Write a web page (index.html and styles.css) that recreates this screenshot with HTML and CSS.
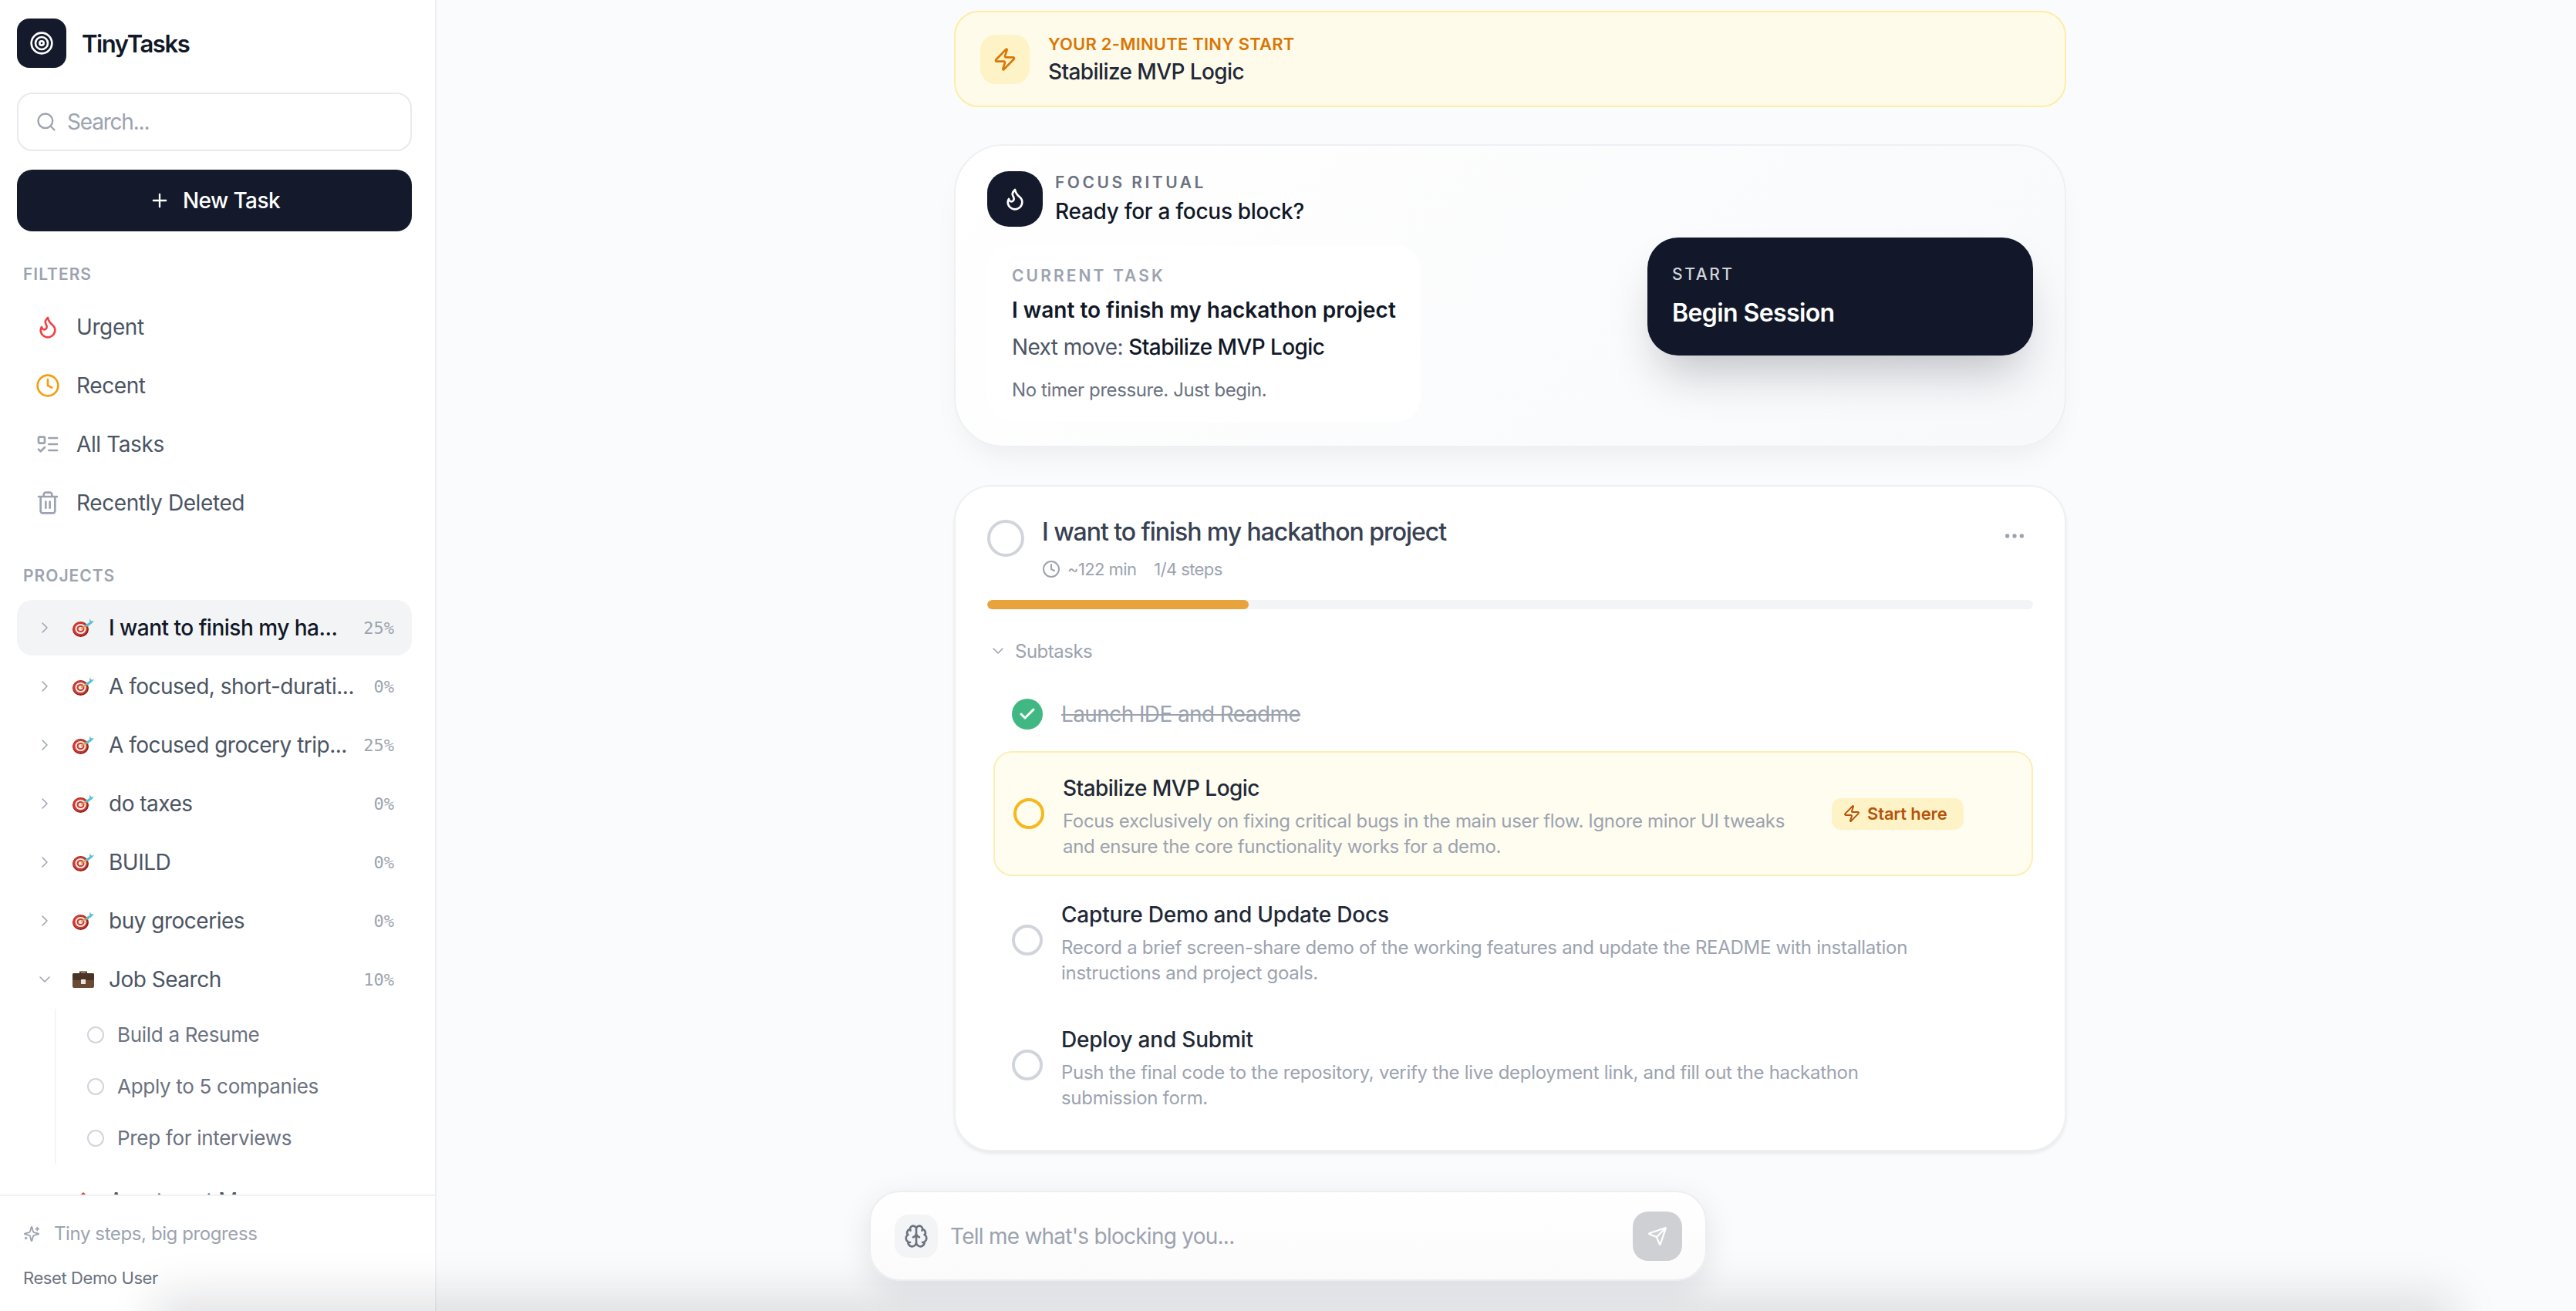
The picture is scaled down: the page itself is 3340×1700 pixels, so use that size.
FILE: index.html
```html
<!DOCTYPE html>
<html>
  <head>
    <title>TinyTasks</title>
    <meta charset="UTF-8" />
    <link rel="stylesheet" href="styles.css">
  </head>
  <body>
    <svg class="defs" width="0" height="0">
      <symbol id="i-flame" viewBox="0 0 24 24"><path d="M8.5 14.5A2.5 2.5 0 0 0 11 12c0-1.38-.5-2-1-3-1.072-2.143-.224-4.054 2-6 .5 2.5 2 4.9 4 6.5 2 1.6 3 3.5 3 5.5a7 7 0 1 1-14 0c0-1.153.433-2.294 1-3a2.5 2.5 0 0 0 2.5 2.5z"/></symbol>
      <symbol id="i-clock" viewBox="0 0 24 24"><circle cx="12" cy="12" r="10"/><path d="M12 6v6l4 2"/></symbol>
      <symbol id="i-todo" viewBox="0 0 24 24"><rect x="3" y="5" width="6" height="6" rx="1"/><path d="m3 17 2 2 4-4M13 6h8M13 12h8M13 18h8"/></symbol>
      <symbol id="i-trash" viewBox="0 0 24 24"><path d="M3 6h18M19 6v14c0 1-1 2-2 2H7c-1 0-2-1-2-2V6M8 6V4c0-1 1-2 2-2h4c1 0 2 1 2 2v2M10 11v6M14 11v6"/></symbol>
      <symbol id="i-zap" viewBox="0 0 24 24"><path d="M4 14a1 1 0 0 1-.78-1.63l9.9-10.2a.5.5 0 0 1 .86.46l-1.92 6.02A1 1 0 0 0 13 10h7a1 1 0 0 1 .78 1.63l-9.9 10.2a.5.5 0 0 1-.86-.46l1.92-6.02A1 1 0 0 0 11 14z"/></symbol>
      <symbol id="i-right" viewBox="0 0 24 24"><path d="m9 18 6-6-6-6"/></symbol>
      <symbol id="i-down" viewBox="0 0 24 24"><path d="m6 9 6 6 6-6"/></symbol>
      <symbol id="i-dart" viewBox="0 0 28 24">
        <ellipse cx="10.5" cy="14" rx="10.5" ry="10" fill="#8f1f1a"/>
        <ellipse cx="10" cy="13.5" rx="9.5" ry="9" fill="#cf3a30"/>
        <ellipse cx="10.5" cy="13.5" rx="7" ry="6.6" fill="#f7ece8"/>
        <ellipse cx="10.5" cy="13.5" rx="5" ry="4.6" fill="#cf3a30"/>
        <ellipse cx="10.5" cy="13.5" rx="2.8" ry="2.5" fill="#f7ece8"/>
        <path d="M11 13.5 18 9" stroke="#d9a441" stroke-width="1.6" fill="none"/>
        <path d="M16.5 8.5 22 5 22.500 0.5 24.500 3.5 28 3 25 6.5 19 11z" fill="#5cc0cf"/>
      </symbol>
      <symbol id="i-case" viewBox="0 0 28 24">
        <path d="M10 5V2.500h8V5" fill="none" stroke="#5a3d2b" stroke-width="2"/>
        <rect x="0" y="4" width="28" height="19" rx="2" fill="#6b4a33"/>
        <rect x="0" y="4" width="28" height="9" rx="2" fill="#4a3224"/>
        <rect x="11" y="12" width="6" height="6" fill="#e8e4df"/>
      </symbol>
      <symbol id="i-house" viewBox="0 0 28 24">
        <path d="M14 1 1 13h3v10h20V13h3z" fill="#f1e3cd"/>
        <path d="M14 1 1 13h4L14 5l9 8h4z" fill="#c9503c"/>
      </symbol>
    </svg>

    <aside class="sidebar">
      <div class="brand">
        <div class="brand-logo">
          <svg class="icon" viewBox="0 0 24 24"><circle cx="12" cy="12" r="10"/><circle cx="12" cy="12" r="6"/><circle cx="12" cy="12" r="2"/></svg>
        </div>
        <span class="brand-name">TinyTasks</span>
      </div>

      <div class="search">
        <svg class="icon" viewBox="0 0 24 24"><circle cx="11" cy="11" r="8"/><path d="m21 21-4.300-4.300"/></svg>
        <span>Search...</span>
      </div>

      <button class="new-task">
        <svg class="icon" viewBox="0 0 24 24"><path d="M5 12h14M12 5v14"/></svg>
        New Task
      </button>

      <div class="nav">
        <div class="section-label">FILTERS</div>
        <div class="filter"><svg class="icon red"><use href="#i-flame"/></svg>Urgent</div>
        <div class="filter"><svg class="icon amber"><use href="#i-clock"/></svg>Recent</div>
        <div class="filter"><svg class="icon gray"><use href="#i-todo"/></svg>All Tasks</div>
        <div class="filter"><svg class="icon gray"><use href="#i-trash"/></svg>Recently Deleted</div>

        <div class="section-label projects-label">PROJECTS</div>
        <div class="project active">
          <svg class="icon chev"><use href="#i-right"/></svg>
          <svg class="emoji"><use href="#i-dart"/></svg>
          <span class="project-name">I want to finish my ha...</span>
          <span class="pct">25%</span>
        </div>
        <div class="project">
          <svg class="icon chev"><use href="#i-right"/></svg>
          <svg class="emoji"><use href="#i-dart"/></svg>
          <span class="project-name">A focused, short-durati...</span>
          <span class="pct">0%</span>
        </div>
        <div class="project">
          <svg class="icon chev"><use href="#i-right"/></svg>
          <svg class="emoji"><use href="#i-dart"/></svg>
          <span class="project-name">A focused grocery trip...</span>
          <span class="pct">25%</span>
        </div>
        <div class="project">
          <svg class="icon chev"><use href="#i-right"/></svg>
          <svg class="emoji"><use href="#i-dart"/></svg>
          <span class="project-name">do taxes</span>
          <span class="pct">0%</span>
        </div>
        <div class="project">
          <svg class="icon chev"><use href="#i-right"/></svg>
          <svg class="emoji"><use href="#i-dart"/></svg>
          <span class="project-name">BUILD</span>
          <span class="pct">0%</span>
        </div>
        <div class="project">
          <svg class="icon chev"><use href="#i-right"/></svg>
          <svg class="emoji"><use href="#i-dart"/></svg>
          <span class="project-name">buy groceries</span>
          <span class="pct">0%</span>
        </div>
        <div class="project">
          <svg class="icon chev"><use href="#i-down"/></svg>
          <svg class="emoji"><use href="#i-case"/></svg>
          <span class="project-name">Job Search</span>
          <span class="pct">10%</span>
        </div>
        <div class="project-tasks">
          <div class="project-task"><span class="dot"></span>Build a Resume</div>
          <div class="project-task"><span class="dot"></span>Apply to 5 companies</div>
          <div class="project-task"><span class="dot"></span>Prep for interviews</div>
        </div>
        <div class="project">
          <svg class="icon chev"><use href="#i-right"/></svg>
          <svg class="emoji"><use href="#i-house"/></svg>
          <span class="project-name">Apartment Move</span>
          <span class="pct">17%</span>
        </div>
      </div>

      <div class="side-footer">
        <div class="tagline">
          <svg class="icon" viewBox="0 0 24 24"><path d="M9.937 15.500A2 2 0 0 0 8.500 14.063l-6.135-1.582a.5.5 0 0 1 0-.962L8.500 9.936A2 2 0 0 0 9.937 8.500l1.582-6.135a.5.5 0 0 1 .963 0L14.063 8.500A2 2 0 0 0 15.500 9.937l6.135 1.581a.5.5 0 0 1 0 .964L15.500 14.063a2 2 0 0 0-1.437 1.437l-1.582 6.135a.5.5 0 0 1-.963 0zM20 3v4M22 5h-4M4 17v2M5 18H3"/></svg>
          Tiny steps, big progress
        </div>
        <div class="reset">Reset Demo User</div>
      </div>
    </aside>

    <main class="main">
      <div class="column">
        <section class="tiny-start">
          <div class="tiny-icon"><svg class="icon"><use href="#i-zap"/></svg></div>
          <div>
            <div class="tiny-label">YOUR 2-MINUTE TINY START</div>
            <div class="tiny-title">Stabilize MVP Logic</div>
          </div>
        </section>

        <section class="focus">
          <div class="focus-head">
            <div class="focus-icon"><svg class="icon"><use href="#i-flame"/></svg></div>
            <div>
              <div class="focus-label">FOCUS RITUAL</div>
              <div class="focus-title">Ready for a focus block?</div>
            </div>
          </div>
          <div class="focus-body">
            <div class="current">
              <div class="current-label">CURRENT TASK</div>
              <div class="current-task">I want to finish my hackathon project</div>
              <div class="current-next">Next move: <b>Stabilize MVP Logic</b></div>
              <div class="current-note">No timer pressure. Just begin.</div>
            </div>
            <button class="begin">
              <span class="begin-label">START</span>
              <span class="begin-title">Begin Session</span>
            </button>
          </div>
        </section>

        <section class="task">
          <div class="task-head">
            <span class="task-check"></span>
            <div class="task-info">
              <div class="task-title">I want to finish my hackathon project</div>
              <div class="task-meta">
                <svg class="icon"><use href="#i-clock"/></svg>
                <span>~122 min</span>
                <span class="steps">1/4 steps</span>
              </div>
            </div>
            <svg class="icon more" viewBox="0 0 24 24"><circle cx="5" cy="12" r="1"/><circle cx="12" cy="12" r="1"/><circle cx="19" cy="12" r="1"/></svg>
          </div>

          <div class="progress"><div class="progress-fill" style="width: 25%"></div></div>

          <div class="subtasks-toggle">
            <svg class="icon"><use href="#i-down"/></svg>
            Subtasks
          </div>

          <div class="subtask done">
            <span class="check-done">
              <svg class="icon" viewBox="0 0 24 24"><path d="M20 6 9 17l-5-5"/></svg>
            </span>
            <span class="subtask-title">Launch IDE and Readme</span>
          </div>

          <div class="subtask current-step">
            <span class="circle"></span>
            <div class="subtask-text">
              <div class="subtask-title">Stabilize MVP Logic</div>
              <div class="subtask-desc">Focus exclusively on fixing critical bugs in the main user flow. Ignore minor UI tweaks<br>and ensure the core functionality works for a demo.</div>
            </div>
            <span class="start-here"><svg class="icon"><use href="#i-zap"/></svg>Start here</span>
          </div>

          <div class="subtask">
            <span class="circle"></span>
            <div class="subtask-text">
              <div class="subtask-title">Capture Demo and Update Docs</div>
              <div class="subtask-desc">Record a brief screen-share demo of the working features and update the README with installation<br>instructions and project goals.</div>
            </div>
          </div>

          <div class="subtask">
            <span class="circle"></span>
            <div class="subtask-text">
              <div class="subtask-title">Deploy and Submit</div>
              <div class="subtask-desc">Push the final code to the repository, verify the live deployment link, and fill out the hackathon<br>submission form.</div>
            </div>
          </div>
        </section>
      </div>
    </main>

    <div class="bottom-shade"></div>

    <div class="composer">
      <div class="composer-icon">
        <svg class="icon" viewBox="0 0 24 24"><path d="M12 5a3 3 0 1 0-5.997.125 4 4 0 0 0-2.526 5.770 4 4 0 0 0 .556 6.588A4 4 0 1 0 12 18ZM12 5a3 3 0 1 1 5.997.125 4 4 0 0 1 2.526 5.770 4 4 0 0 1-.556 6.588A4 4 0 1 1 12 18ZM15 13a4.500 4.500 0 0 1-3-4 4.500 4.500 0 0 1-3 4M17.599 6.500a3 3 0 0 0 .399-1.375M6.003 5.125A3 3 0 0 0 6.401 6.500M3.477 10.896a4 4 0 0 1 .585-.396M19.938 10.500a4 4 0 0 1 .585.396M6 18a4 4 0 0 1-1.967-.516M19.967 17.484A4 4 0 0 1 18 18"/></svg>
      </div>
      <span class="composer-text">Tell me what's blocking you...</span>
      <button class="send">
        <svg class="icon" viewBox="0 0 24 24"><path d="M14.536 21.686a.5.5 0 0 0 .937-.024l6.500-19a.496.496 0 0 0-.635-.635l-19 6.500a.5.5 0 0 0-.024.937l7.930 3.180a2 2 0 0 1 1.112 1.110zM21.854 2.147l-10.940 10.939"/></svg>
      </button>
    </div>
  </body>
</html>
```

FILE: styles.css
```css
* {
  box-sizing: border-box;
}

html,
body {
  margin: 0;
  padding: 0;
  height: 100%;
}

body {
  display: flex;
  position: relative;
  overflow: hidden;
  font-family: Inter, "Noto Sans", sans-serif;
  background-color: #fafbfc;
  color: #111827;
}

button {
  font-family: inherit;
  border: none;
  cursor: pointer;
}

.defs {
  position: absolute;
}

.icon {
  fill: none;
  stroke: currentColor;
  stroke-width: 2;
  stroke-linecap: round;
  stroke-linejoin: round;
  flex-shrink: 0;
}

/* sidebar */
.sidebar {
  width: 566px;
  height: 1700px;
  flex-shrink: 0;
  display: flex;
  flex-direction: column;
  background: #fff;
  border-right: 2px solid #eef0f2;
}

.brand {
  display: flex;
  align-items: center;
  gap: 20px;
  margin: 24px 22px 32px;
}

.brand-logo {
  width: 64px;
  height: 64px;
  border-radius: 16px;
  background: #141a2b;
  color: #fff;
  display: flex;
  align-items: center;
  justify-content: center;
}

.brand-logo .icon {
  width: 32px;
  height: 32px;
}

.brand-name {
  font-size: 31px;
  font-weight: 600;
  letter-spacing: -1.4px;
}

.search {
  display: flex;
  align-items: center;
  gap: 13px;
  height: 76px;
  margin: 0 30px 24px 22px;
  padding-left: 22px;
  border: 2px solid #e8eaed;
  border-radius: 20px;
  font-size: 28px;
  letter-spacing: -1.2px;
  color: #9ca3af;
}

.search .icon {
  width: 28px;
  height: 28px;
}

.new-task {
  display: flex;
  align-items: center;
  justify-content: center;
  gap: 16px;
  height: 80px;
  margin: 0 30px 0 22px;
  border-radius: 20px;
  background: #141a2b;
  color: #fff;
  font-size: 28px;
  font-weight: 500;
  letter-spacing: -0.6px;
}

.new-task .icon {
  width: 28px;
  height: 28px;
}

.nav {
  flex: 1;
  min-height: 0;
  overflow: hidden;
  padding: 44px 30px 0 22px;
}

.section-label {
  padding-left: 8px;
  font-size: 21px;
  line-height: 24px;
  font-weight: 600;
  letter-spacing: 1px;
  color: #9ca3af;
  margin-bottom: 20px;
}

.projects-label {
  margin-top: 47px;
  margin-bottom: 19px;
}

.filter {
  display: flex;
  align-items: center;
  gap: 21px;
  height: 72px;
  margin-bottom: 4px;
  padding-left: 24px;
  font-size: 28px;
  letter-spacing: -0.4px;
  color: #4b5563;
}

.filter .icon {
  width: 32px;
  height: 32px;
}

.red {
  color: #ef4444;
}

.amber {
  color: #f59e0b;
}

.gray {
  color: #9ca3af;
}

.project {
  display: flex;
  align-items: center;
  height: 72px;
  margin-bottom: 4px;
  padding: 0 23px 0 24px;
  border-radius: 20px;
  font-size: 28px;
  letter-spacing: -0.5px;
  color: #4b5563;
}

.project.active {
  background: #f3f4f6;
  color: #111827;
  font-weight: 500;
}

.chev {
  width: 24px;
  height: 24px;
  color: #9ca3af;
  margin-right: 24px;
  stroke-width: 1.5;
}

.emoji {
  width: 28px;
  height: 24px;
  flex-shrink: 0;
  margin-right: 19px;
}

.project-name {
  flex: 1;
  white-space: nowrap;
}

.pct {
  font-family: "DejaVu Sans Mono", monospace;
  font-size: 22px;
  letter-spacing: 0;
  font-weight: 400;
  color: #9ca3af;
}

.project-tasks {
  margin: -2px 0 12px 49px;
  padding: 0 0 0 40px;
  border-left: 2px solid #f3f4f6;
}

.project-task {
  display: flex;
  align-items: center;
  gap: 17px;
  height: 67px;
  font-size: 26px;
  letter-spacing: -0.3px;
  color: #6b7280;
}

.dot {
  width: 22px;
  height: 22px;
  border-radius: 50%;
  border: 2px solid #d1d5db;
  flex-shrink: 0;
}

.side-footer {
  height: 151px;
  padding: 36px 30px 0;
  background: #fff;
  border-top: 2px solid #f1f2f4;
}

.tagline {
  display: flex;
  align-items: center;
  gap: 18px;
  font-size: 24px;
  line-height: 26px;
  letter-spacing: -0.4px;
  color: #9ca3af;
}

.tagline .icon {
  width: 22px;
  height: 22px;
}

.reset {
  margin-top: 31px;
  font-size: 22px;
  line-height: 26px;
  letter-spacing: -0.4px;
  color: #6b7280;
}

/* main column */
.main {
  flex: 1;
  display: flex;
  justify-content: center;
  padding: 14px 0 0 10px;
}

.column {
  width: 1442px;
}

.tiny-start {
  display: flex;
  align-items: center;
  gap: 24px;
  height: 125px;
  padding-left: 32px;
  border: 2px solid #fdeda6;
  border-radius: 32px;
  background: #fffbeb;
}

.tiny-icon {
  width: 64px;
  height: 64px;
  border-radius: 20px;
  background: #fef3c7;
  color: #d97706;
  display: flex;
  align-items: center;
  justify-content: center;
}

.tiny-icon .icon {
  width: 32px;
  height: 32px;
}

.tiny-label {
  font-size: 22px;
  line-height: 26px;
  font-weight: 600;
  letter-spacing: 0.2px;
  color: #d97706;
  margin-bottom: 6px;
}

.tiny-title {
  font-size: 28px;
  line-height: 34px;
  font-weight: 500;
  letter-spacing: -0.6px;
  color: #1f2937;
}

.focus {
  height: 393px;
  margin-top: 48px;
  padding: 33px 41px 0;
  border: 2px solid #eef0f3;
  border-radius: 64px;
  background: linear-gradient(135deg, #fff 0%, #f8f9fb 100%);
  box-shadow: 0 20px 40px -16px rgba(17, 24, 39, 0.08);
}

.focus-head {
  display: flex;
  align-items: center;
  gap: 16px;
}

.focus-icon {
  width: 72px;
  height: 72px;
  border-radius: 28px;
  background: #141a2b;
  color: #fff;
  display: flex;
  align-items: center;
  justify-content: center;
}

.focus-icon .icon {
  width: 32px;
  height: 32px;
}

.focus-label {
  font-size: 21px;
  line-height: 26px;
  font-weight: 600;
  letter-spacing: 3.5px;
  color: #6b7280;
  margin-bottom: 6px;
}

.focus-title {
  font-size: 28px;
  line-height: 36px;
  font-weight: 500;
  letter-spacing: -0.3px;
}

.focus-body {
  display: flex;
  justify-content: space-between;
  align-items: flex-start;
  margin-top: 14px;
}

.current {
  width: 562px;
  height: 229px;
  margin-top: 10px;
  padding: 28px 30px 0 32px;
  background: #fff;
  border-radius: 32px;
}

.current-label {
  font-size: 21px;
  line-height: 24px;
  font-weight: 600;
  letter-spacing: 3.1px;
  color: #9ca3af;
}

.current-task {
  margin-top: 14px;
  font-size: 28px;
  line-height: 36px;
  font-weight: 600;
  letter-spacing: 0;
  white-space: nowrap;
}

.current-next {
  margin-top: 12px;
  font-size: 28px;
  line-height: 36px;
  letter-spacing: -0.6px;
  color: #4b5563;
}

.current-next b {
  font-weight: 500;
  color: #111827;
}

.current-note {
  margin-top: 23px;
  font-size: 24px;
  line-height: 30px;
  letter-spacing: -0.4px;
  color: #6b7280;
}

.begin {
  width: 500px;
  height: 153px;
  padding: 0 32px;
  display: flex;
  flex-direction: column;
  justify-content: center;
  align-items: flex-start;
  border-radius: 40px;
  background: #121829;
  color: #fff;
  box-shadow: 0 36px 60px -16px rgba(17, 24, 39, 0.25);
}

.begin-label {
  font-size: 21px;
  line-height: 24px;
  font-weight: 500;
  letter-spacing: 2.6px;
  color: #d1d5db;
}

.begin-title {
  margin-top: 18px;
  font-size: 32px;
  line-height: 40px;
  font-weight: 600;
  letter-spacing: -0.6px;
}

.task {
  height: 864px;
  margin-top: 49px;
  padding: 40px 41px 0;
  border: 2px solid #eef0f2;
  border-radius: 48px;
  background: #fff;
  box-shadow: 0 3px 4px rgba(17, 24, 39, 0.08);
}

.task-head {
  display: flex;
  align-items: flex-start;
  height: 107px;
}

.task-check {
  width: 48px;
  height: 48px;
  margin-top: 3px;
  margin-right: 23px;
  border-radius: 50%;
  border: 4px solid #d1d5db;
  flex-shrink: 0;
}

.task-info {
  flex: 1;
}

.task-title {
  margin-top: -2px;
  font-size: 32px;
  line-height: 42px;
  font-weight: 500;
  letter-spacing: -1.05px;
  color: #374151;
}

.task-meta {
  display: flex;
  align-items: center;
  margin-top: 12px;
  font-size: 22px;
  line-height: 30px;
  letter-spacing: -0.6px;
  color: #9ca3af;
}

.task-meta .icon {
  width: 24px;
  height: 24px;
  margin-right: 9px;
}

.steps {
  margin-left: 23px;
}

.more {
  width: 32px;
  height: 32px;
  margin: 8px 8px 0 0;
  color: #9ca3af;
}

.progress {
  height: 12px;
  border-radius: 6px;
  background: #f3f4f6;
  overflow: hidden;
}

.progress-fill {
  height: 100%;
  border-radius: 6px;
  background: #e8a33d;
}

.subtasks-toggle {
  display: flex;
  align-items: center;
  gap: 10px;
  margin-top: 40px;
  height: 28px;
  padding-left: 2px;
  font-size: 24px;
  letter-spacing: -0.5px;
  color: #9ca3af;
}

.subtasks-toggle .icon {
  width: 24px;
  height: 24px;
  stroke-width: 1.5;
}

.subtask {
  display: flex;
  align-items: center;
  gap: 24px;
  height: 162px;
  margin-left: 8px;
  padding-left: 24px;
}

.subtask.done {
  height: 64px;
  margin-top: 36px;
  margin-bottom: 16px;
}

.subtask.current-step {
  margin-bottom: 2px;
  border: 2px solid #fdeeb5;
  border-radius: 24px;
  background: #fffdf0;
}

.check-done {
  width: 40px;
  height: 40px;
  border-radius: 50%;
  background: #41b883;
  color: #fff;
  display: flex;
  align-items: center;
  justify-content: center;
}

.check-done .icon {
  width: 24px;
  height: 24px;
  stroke-width: 3;
}

.circle {
  width: 40px;
  height: 40px;
  border-radius: 50%;
  border: 4px solid #d1d5db;
  flex-shrink: 0;
}

.current-step .circle {
  border-color: #f5b81f;
}

.subtask-text {
  flex: 1;
  padding-top: 8px;
}

.subtask-title {
  font-size: 28px;
  line-height: 36px;
  font-weight: 500;
  letter-spacing: -0.2px;
  color: #1f2937;
}

.current-step .subtask-title {
  letter-spacing: -0.55px;
}

.done .subtask-title {
  font-weight: 400;
  letter-spacing: -0.6px;
  color: #9ca3af;
  text-decoration: line-through;
}

.subtask-desc {
  margin-top: 8px;
  font-size: 24px;
  line-height: 33px;
  letter-spacing: -0.3px;
  color: #9ca3af;
  white-space: nowrap;
}

.current-step .subtask-desc {
  letter-spacing: -0.35px;
}

.start-here {
  display: flex;
  align-items: center;
  gap: 8px;
  width: 171px;
  height: 41px;
  margin-right: 88px;
  padding-left: 14px;
  border-radius: 12px;
  background: #fef3c7;
  font-size: 22px;
  font-weight: 600;
  letter-spacing: -0.15px;
  color: #b45309;
  white-space: nowrap;
}

.start-here .icon {
  width: 24px;
  height: 24px;
}

/* composer floats over the page */
.composer {
  position: absolute;
  left: 1127px;
  top: 1544px;
  width: 1086px;
  height: 117px;
  display: flex;
  align-items: center;
  padding: 0 30px 0 31px;
  border: 2px solid #eceef1;
  border-radius: 40px;
  background: linear-gradient(#fff, #fbfbfc);
  box-shadow: 0 12px 40px rgba(17, 24, 39, 0.1);
}

.composer-icon {
  width: 56px;
  height: 56px;
  border-radius: 18px;
  background: #f3f4f6;
  color: #6b7280;
  display: flex;
  align-items: center;
  justify-content: center;
}

.composer-icon .icon {
  width: 32px;
  height: 32px;
}

.composer-text {
  flex: 1;
  margin-left: 16px;
  font-size: 28px;
  letter-spacing: -0.75px;
  color: #9ca3af;
}

.send {
  width: 64px;
  height: 64px;
  padding: 0;
  border-radius: 20px;
  background: #cfd0d4;
  color: #fff;
  display: flex;
  align-items: center;
  justify-content: center;
}

.send .icon {
  width: 26px;
  height: 26px;
}

.bottom-shade {
  position: absolute;
  left: 220px;
  right: 180px;
  bottom: -30px;
  height: 30px;
  background: #9a9ca3;
  box-shadow: 0 0 60px 20px rgba(17, 24, 39, 0.13);
}
```
